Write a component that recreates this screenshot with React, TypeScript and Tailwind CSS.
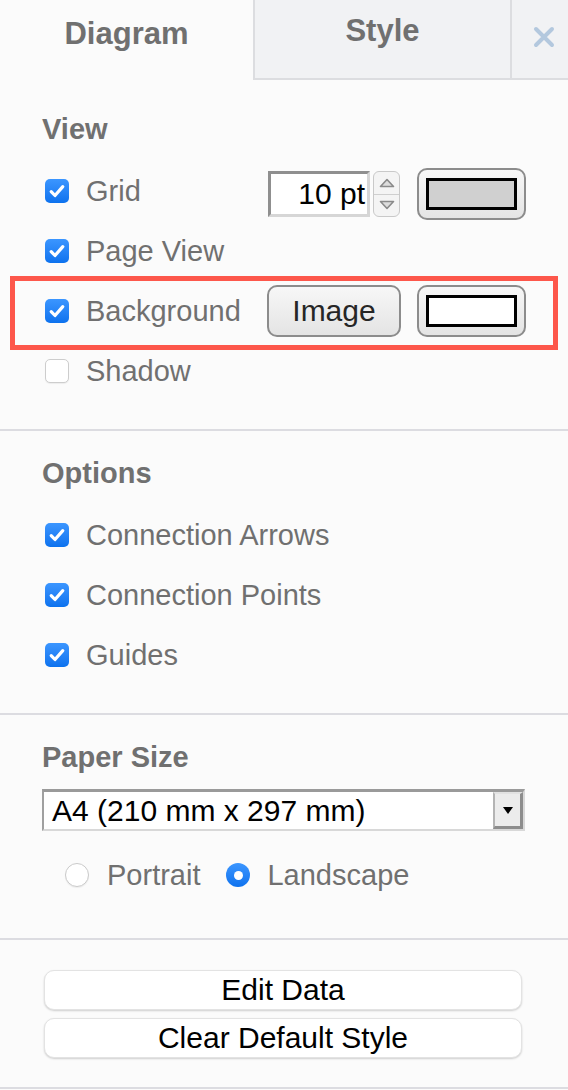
import React from "react";

function Check({ checked }: { checked: boolean }) {
  return checked ? (
    <span className="flex h-6 w-6 shrink-0 items-center justify-center rounded-[5px] bg-linear-to-b from-[#3b96ff] to-[#0b72ee]">
      <svg viewBox="0 0 24 24" className="h-6 w-6">
        <path d="M6.2 12.6 L10 16.5 L17.8 7.6" fill="none" stroke="white" strokeWidth="3.2" strokeLinecap="round" strokeLinejoin="round" />
      </svg>
    </span>
  ) : (
    <span className="h-6 w-6 shrink-0 rounded-[5px] border border-[#cdcdcd] bg-white shadow-[0_1px_1px_rgba(0,0,0,0.06)]" />
  );
}

function Radio({ checked }: { checked: boolean }) {
  return checked ? (
    <span className="flex h-6 w-6 shrink-0 items-center justify-center rounded-full bg-linear-to-b from-[#3b96ff] to-[#0b72ee]">
      <span className="h-[9px] w-[9px] rounded-full bg-white" />
    </span>
  ) : (
    <span className="h-6 w-6 shrink-0 rounded-full border border-[#cacaca] bg-white shadow-[0_1px_1px_rgba(0,0,0,0.06)]" />
  );
}

function ColorButton({ swatch }: { swatch: string }) {
  return (
    <div className="flex h-[52px] w-[109px] items-center justify-center rounded-[10px] border-2 border-[#8c8c8c] bg-linear-to-b from-[#f7f7f7] to-[#e4e4e4]">
      <div className="h-[32px] w-[91px] border-[3px] border-black" style={{ backgroundColor: swatch }} />
    </div>
  );
}

const LABEL = "text-[29px] leading-[32px] text-[#707070]";
const HEAD = "text-[29px] font-bold leading-[32px] text-[#707070]";

function CheckRow({ label, checked, children, labelW }: { label: string; checked: boolean; children?: React.ReactNode; labelW?: string }) {
  return (
    <div className="flex h-[60px] items-center pl-[45px]">
      <Check checked={checked} />
      <span className={`ml-[17px] ${LABEL} ${labelW ?? ""}`}>{label}</span>
      {children}
    </div>
  );
}

export default function App() {
  return (
    <div className="min-h-[1090px] w-[568px] bg-[#fbfbfb] font-['Liberation_Sans',Arial,sans-serif]">
      {/* Tabs */}
      <div className="flex h-[80px]">
        <div className="flex w-[253px] justify-center pt-[18px]">
          <span className="text-[31px] font-bold leading-[32px] text-[#707070]">Diagram</span>
        </div>
        <div className="flex w-[257px] justify-center border-b-2 border-l-2 border-[#dcdde0] bg-[#f1f2f4] pt-[15px]">
          <span className="text-[31px] font-bold leading-[32px] text-[#707070]">Style</span>
        </div>
        <div className="flex flex-1 items-start justify-center border-b-2 border-l-2 border-[#dcdde0] bg-[#f1f2f4] pl-[8px] pt-[26px]">
          <svg viewBox="0 0 22 22" className="h-[22px] w-[22px]">
            <path d="M3 3 L19 19 M19 3 L3 19" stroke="#b3c8de" strokeWidth="4" strokeLinecap="round" />
          </svg>
        </div>
      </div>

      {/* View */}
      <div className="border-b-2 border-[#dcdce1] pb-[28px] pt-[33px]">
        <div className={`pl-[42px] ${HEAD}`}>View</div>
        <div className="mt-[16px]">
          <CheckRow label="Grid" checked labelW="w-[182px]">
            <div className="mt-[6px] flex items-center">
              <div className="flex h-[46px] w-[102px] items-center justify-end border-[3px] border-b-[#d6d6d6] border-l-[#8f8f8f] border-r-[#d6d6d6] border-t-[#8f8f8f] bg-white pr-[2px] text-[30px] leading-[32px] text-black">
                10 pt
              </div>
              <div className="ml-[3px] flex h-[46px] w-[27px] flex-col overflow-hidden rounded-[6px] border-[1.5px] border-[#c9c9c9] bg-[#f4f4f4]">
                <div className="flex flex-1 items-center justify-center border-b border-[#cfcfcf]">
                  <svg viewBox="0 0 16 10" className="h-[10px] w-[16px]">
                    <polygon points="8,1.5 14.5,8.5 1.5,8.5" fill="#dcdcdc" stroke="#8a8a8a" strokeWidth="1.6" strokeLinejoin="round" />
                  </svg>
                </div>
                <div className="flex flex-1 items-center justify-center">
                  <svg viewBox="0 0 16 10" className="h-[10px] w-[16px]">
                    <polygon points="1.5,1.5 14.5,1.5 8,8.5" fill="#dcdcdc" stroke="#8a8a8a" strokeWidth="1.6" strokeLinejoin="round" />
                  </svg>
                </div>
              </div>
              <div className="ml-[17px]">
                <ColorButton swatch="#d0d0d0" />
              </div>
            </div>
          </CheckRow>
          <CheckRow label="Page View" checked />
          <div className="relative">
            <div className="pointer-events-none absolute left-[10px] top-[-5px] h-[74px] w-[548px] border-[5px] border-[#fd574b]" />
            <CheckRow label="Background" checked labelW="w-[181px]">
              <div className="flex items-center">
                <div className="flex h-[52px] w-[134px] items-center justify-center rounded-[10px] border-2 border-[#8c8c8c] bg-linear-to-b from-[#f7f7f7] to-[#e4e4e4] text-[30px] leading-[32px] text-[#262626]">
                  Image
                </div>
                <div className="ml-[16px]">
                  <ColorButton swatch="#ffffff" />
                </div>
              </div>
            </CheckRow>
          </div>
          <CheckRow label="Shadow" checked={false} />
        </div>
      </div>

      {/* Options */}
      <div className="border-b-2 border-[#dcdce1] pb-[28px] pt-[26px]">
        <div className={`pl-[42px] ${HEAD}`}>Options</div>
        <div className="mt-[16px]">
          <CheckRow label="Connection Arrows" checked />
          <CheckRow label="Connection Points" checked />
          <CheckRow label="Guides" checked />
        </div>
      </div>

      {/* Paper Size */}
      <div className="border-b-2 border-[#dcdce1] pb-[33px] pt-[26px]">
        <div className={`pl-[42px] ${HEAD}`}>Paper Size</div>
        <div className="ml-[42px] mt-[16px] flex h-[42px] w-[483px] border-2 border-b-[#d8d8d8] border-l-[#a0a0a0] border-r-[#d8d8d8] border-t-[3px] border-t-[#9a9a9a] bg-white">
          <div className="flex flex-1 items-center pl-[8px] text-[30px] leading-[32px] text-black">A4 (210 mm x 297 mm)</div>
          <div className="flex w-[30px] items-center justify-center border-b-[3px] border-l-2 border-r-[3px] border-t-2 border-b-[#8d8d8d] border-l-[#b4b4b4] border-r-[#8d8d8d] border-t-[#e2e2e2] bg-[#ececec]">
            <svg viewBox="0 0 10 7" className="h-[7px] w-[10px]">
              <polygon points="0,0 10,0 5,7" fill="#000" />
            </svg>
          </div>
        </div>
        <div className="mt-[14px] flex h-[60px] items-center pl-[65px]">
          <Radio checked={false} />
          <span className={`ml-[18px] ${LABEL}`}>Portrait</span>
          <span className="ml-[26px]">
            <Radio checked />
          </span>
          <span className={`ml-[17px] ${LABEL}`}>Landscape</span>
        </div>
      </div>

      {/* Buttons */}
      <div className="border-b-2 border-[#dcdce1] pb-[29px] pt-[30px]">
        <div className="ml-[44px] flex h-[40px] w-[478px] items-center justify-center rounded-[10px] border border-[#e3e3e3] bg-white text-[30px] leading-[32px] text-black shadow-[0_1px_2px_rgba(0,0,0,0.18)]">
          Edit Data
        </div>
        <div className="ml-[44px] mt-[8px] flex h-[40px] w-[478px] items-center justify-center rounded-[10px] border border-[#e3e3e3] bg-white text-[30px] leading-[32px] text-black shadow-[0_1px_2px_rgba(0,0,0,0.18)]">
          Clear Default Style
        </div>
      </div>
    </div>
  );
}
